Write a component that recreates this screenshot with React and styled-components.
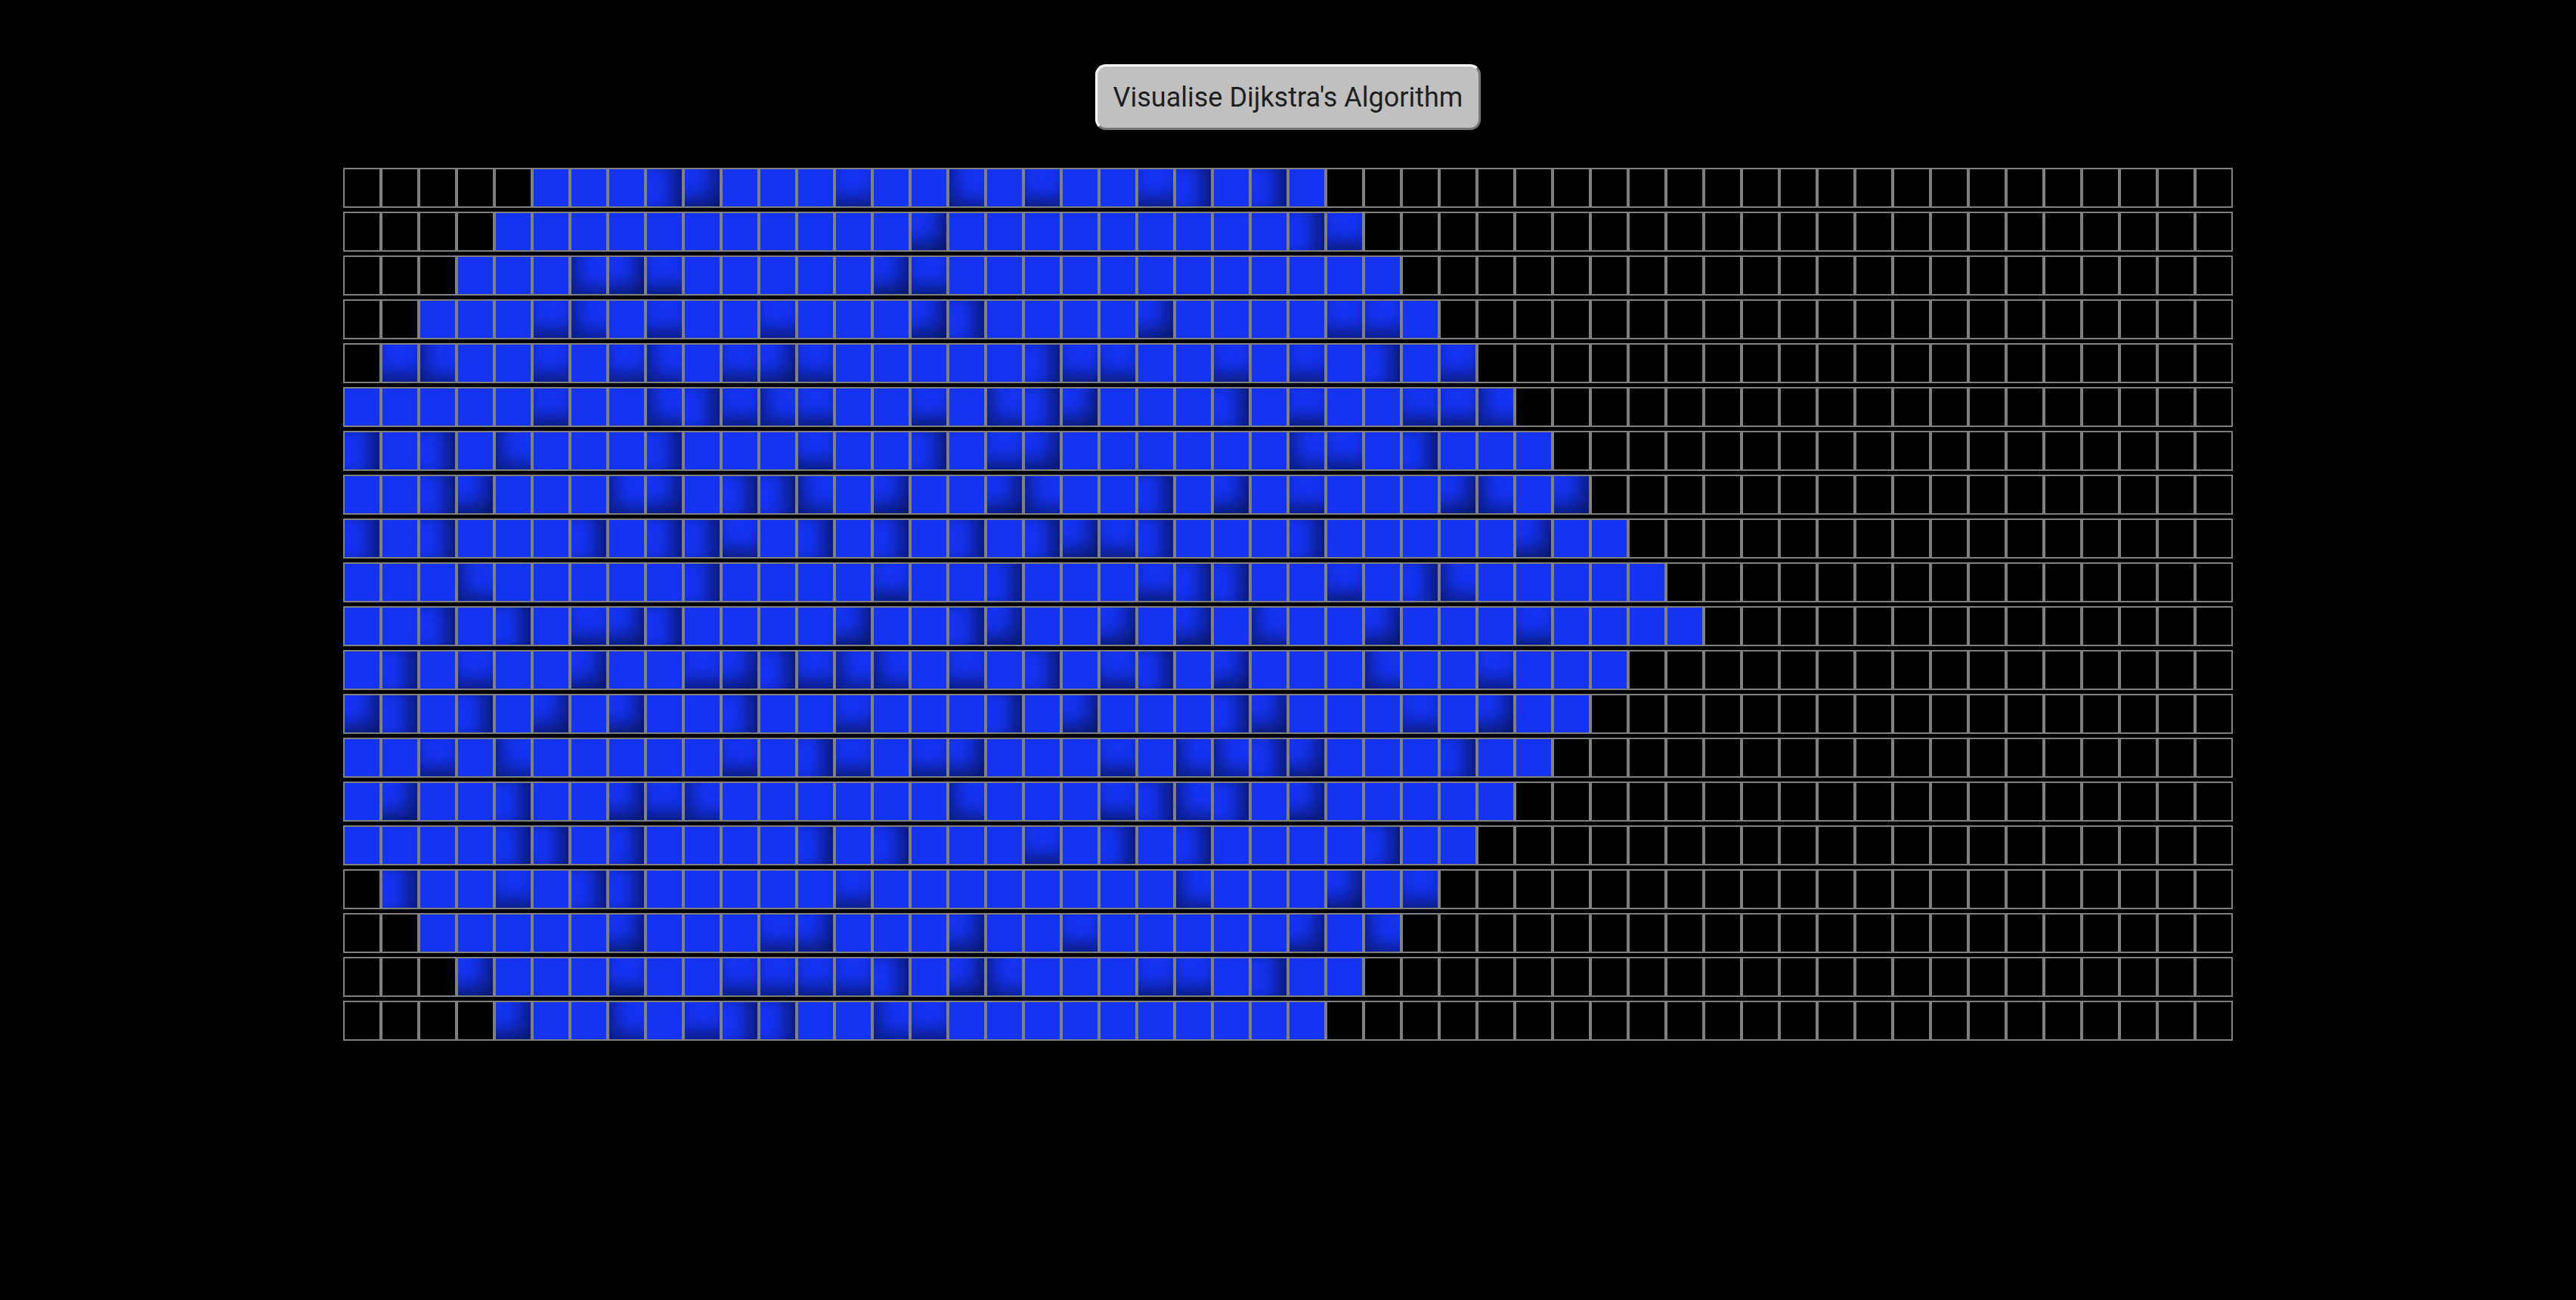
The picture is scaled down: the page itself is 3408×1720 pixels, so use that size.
import React from "react"
import styled, { createGlobalStyle } from "styled-components"

const ROWS = 20
const COLS = 50
const START = [10, 15]
const RADIUS = 20

const GlobalStyle = createGlobalStyle`
  html, body {
    margin: 0;
    padding: 0;
    background: #000;
  }
  body {
    font-family: Roboto, "Liberation Sans", Arial, sans-serif;
  }
`

const Page = styled.div`
  min-height: 1720px;
  background: #000;
  display: flex;
  flex-direction: column;
  align-items: center;
  padding-top: 85px;
  box-sizing: border-box;
`

const VisualiseButton = styled.button`
  width: 510px;
  height: 87px;
  box-sizing: border-box;
  background: #c0c0c0;
  color: #1f1f1f;
  font-family: Roboto, "Liberation Sans", Arial, sans-serif;
  font-size: 36px;
  border: 3px solid;
  border-top-color: #fff;
  border-left-color: #fff;
  border-right-color: #777;
  border-bottom-color: #777;
  border-radius: 14px;
  cursor: pointer;
  padding: 0;
`

const Grid = styled.div`
  margin-top: 50px;
  display: flex;
  flex-direction: column;
  gap: 5px;
`

const Row = styled.div`
  display: flex;
`

const shadows = {
  none: "none",
  right: "inset -22px 0 24px -10px rgba(0, 0, 0, 0.55)",
  bottom: "inset 0 -20px 24px -10px rgba(0, 0, 0, 0.5)",
  corner: "inset -20px -20px 28px -12px rgba(0, 0, 0, 0.6)",
  leftBottom: "inset 18px -18px 26px -12px rgba(0, 0, 0, 0.5)",
}

const Cell = styled.div`
  width: 50px;
  height: 53px;
  box-sizing: border-box;
  border: 2px solid #808080;
  background: ${({ $visited }) => ($visited ? "#1434f2" : "#000")};
  box-shadow: ${({ $shade }) => shadows[$shade]};
`

const isVisited = (r, c) => {
  const d = Math.abs(r - START[0]) + Math.abs(c - START[1])
  if (d < RADIUS) return true
  return d === RADIUS && !(r > START[0] && c > START[1])
}

// cheap deterministic hash so the shading looks scattered but stays stable
const shadeFor = (r, c) => {
  const h = Math.abs(Math.sin(r * 12.9898 + c * 78.233) * 43758.5453) % 1
  if (h < 0.55) return "none"
  if (h < 0.7) return "right"
  if (h < 0.82) return "bottom"
  if (h < 0.93) return "corner"
  return "leftBottom"
}

export default function App() {
  const rows = []
  for (let r = 0; r < ROWS; r++) {
    const cells = []
    for (let c = 0; c < COLS; c++) {
      const visited = isVisited(r, c)
      cells.push(
        <Cell key={c} $visited={visited} $shade={visited ? shadeFor(r, c) : "none"} />
      )
    }
    rows.push(<Row key={r}>{cells}</Row>)
  }

  return (
    <>
      <GlobalStyle />
      <Page>
        <VisualiseButton>Visualise Dijkstra's Algorithm</VisualiseButton>
        <Grid>{rows}</Grid>
      </Page>
    </>
  )
}
